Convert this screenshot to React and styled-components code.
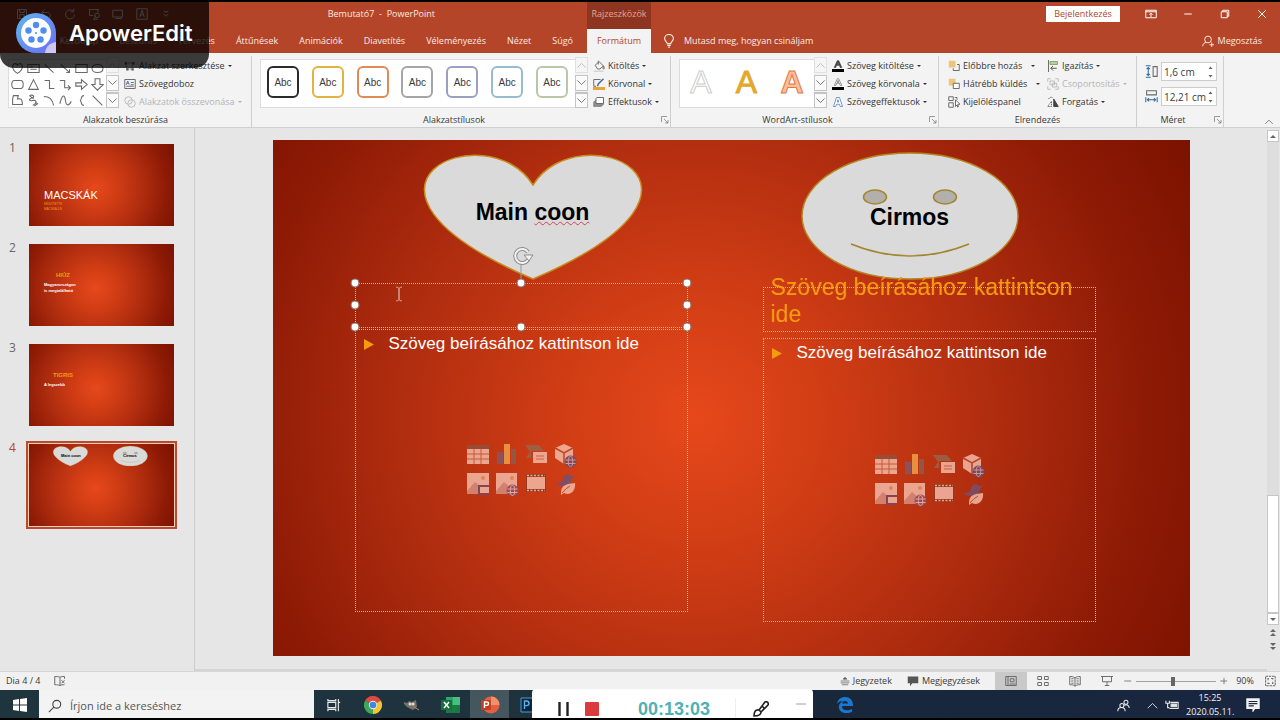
import styled, { createGlobalStyle, css } from 'styled-components';

const color = {
  brand: '#b54528',
  brandDark: '#8d3520',
  ribbon: '#f3f3f3',
  work: '#e6e6e6',
  line: '#cfcfcf',
  text: '#3a3a3a',
  muted: '#b4b4b4',
  icon: '#6a6a6a',
  accent: '#f39c12',
};

const GlobalStyle = createGlobalStyle`
  * { box-sizing: border-box; }
  body {
    margin: 0;
    background: #000;
    font: 500 9px/14px 'Open Sans', 'Noto Sans', sans-serif;
    color: ${color.text};
  }
  button, input {
    margin: 0;
    padding: 0;
    border: 0;
    background: none;
    font: inherit;
    color: inherit;
  }
  p, h1, h2 { margin: 0; }
  svg { display: block; flex: none; }
`;

const Page = styled.div`
  position: relative;
  min-height: 100vh;
  display: flex;
  flex-direction: column;
  padding: 2px 0;
  overflow: hidden;
`;

/* header */

const Header = styled.header`
  display: grid;
  grid-template-columns: 587px 64px 1fr;
  grid-template-rows: 27px 24px;
  background: ${color.brand};
  color: #fbe9e2;
`;

const TitleArea = styled.div`
  display: flex;
  align-items: center;
  justify-content: space-between;
  padding: 0 152px 3px 16px;
`;

const QuickAccess = styled.div`
  display: flex;
  gap: 12px;
`;

const Title = styled.h1`
  font-size: 9px;
  font-weight: 500;
  white-space: pre;
`;

const ContextTitle = styled.div`
  display: flex;
  align-items: center;
  justify-content: center;
  padding-bottom: 3px;
  background: ${color.brandDark};
  color: #e9a48f;
`;

const WindowButtons = styled.div`
  display: flex;
  align-items: center;
  justify-content: flex-end;
  gap: 25px;
  padding: 0 12px 3px 0;
`;

const SignIn = styled.button`
  width: 74px;
  height: 16px;
  background: #fff;
  color: ${color.brand};
  line-height: 14px;
`;

const Tabs = styled.nav`
  display: flex;
  align-items: center;
  justify-content: flex-end;
  gap: 21px;
  padding-right: 14px;
`;

const Tab = styled.button`
  white-space: nowrap;
`;

const ActiveTab = styled.button`
  background: ${color.ribbon};
  color: ${color.brand};
`;

const TabsEnd = styled.div`
  display: flex;
  align-items: center;
  justify-content: space-between;
  padding: 0 18px 0 11px;
`;

const HeaderButton = styled.button`
  display: flex;
  align-items: center;
  gap: ${(p) => p.$gap || 4}px;
`;

/* ribbon */

const Ribbon = styled.section`
  display: grid;
  grid-template-columns: 252px 419px 268px 198px 87px 1fr;
  height: 75px;
  padding: 3px 0 1px;
  background: ${color.ribbon};
  border-bottom: 1px solid ${color.line};
`;

const Group = styled.section`
  display: grid;
  grid-template-rows: 57px 14px;
  padding-left: 8px;
  border-right: 1px solid ${color.line};
`;

const GroupBody = styled.div`
  display: flex;
  align-items: flex-start;
  padding-top: 1px;
`;

const GroupFooter = styled.div`
  position: relative;
  display: flex;
  align-items: center;
  justify-content: center;
  margin-left: -8px;
  padding-right: ${(p) => (p.$launcher ? 14 : 0)}px;
`;

const Launcher = styled.button`
  position: absolute;
  right: 1px;
  top: 3px;
`;

const Gallery = styled.div`
  display: flex;
  align-items: center;
  justify-content: space-between;
  width: ${(p) => p.$width}px;
  height: 49px;
  margin-top: 2px;
  padding: 0 7px 3px 6px;
  background: #fff;
  border: 1px solid #dcdcdc;
  border-right: 0;
`;

const ShapeGrid = styled.div`
  display: grid;
  grid-template-columns: repeat(6, 16px);
  grid-auto-rows: 16px;
  width: 98px;
  height: 49px;
  margin-top: 2px;
  background: #fff;
  border: 1px solid #dcdcdc;
  border-right: 0;
  place-items: center;
`;

const Scroller = styled.div`
  display: flex;
  flex-direction: column;
  width: 13px;
  height: 51px;
  justify-content: space-between;
`;

const ScrollerButton = styled.button`
  height: 16px;
  display: grid;
  place-items: center;
  background: #fafafa;
  border: 1px solid #c4c4c4;
  border-top-width: ${(p) => (p.$more ? 2 : 1)}px;
  opacity: ${(p) => (p.$off ? 0.4 : 1)};
`;

const Preset = styled.button`
  width: 32px;
  height: 32px;
  border: 2px solid ${(p) => p.$color};
  border-radius: 6px;
  font: 10px 'Liberation Sans', Arial, sans-serif;
`;

const WordArt = styled.button`
  width: 30px;
  font: 32px/36px 'Liberation Sans', Arial, sans-serif;
  font-weight: ${(p) => p.$weight};
  color: ${(p) => p.$fill};
  -webkit-text-stroke: 1px ${(p) => p.$stroke};
`;

const Commands = styled.div`
  display: flex;
  flex-direction: column;
  padding-left: ${(p) => p.$left || 5}px;
  ${(p) => p.$width && css`width: ${p.$width}px;`}
`;

const CommandButton = styled.button`
  display: flex;
  align-items: center;
  gap: 3px;
  height: 18px;
  white-space: nowrap;
  color: ${(p) => (p.disabled ? color.muted : '#333')};
`;

const Caret = styled.span`
  margin-left: ${(p) => (p.$far ? 6 : 0)}px;
  border: 2px solid transparent;
  border-top-color: currentColor;
  border-bottom: 0;
`;

const SizeFields = styled.div`
  display: flex;
  flex-direction: column;
  gap: 6px;
  padding-top: 6px;
`;

const SizeField = styled.label`
  display: flex;
  align-items: center;
  gap: 3px;
`;

const Spinner = styled.span`
  display: flex;
  align-items: center;
  width: 56px;
  height: 19px;
  padding: 0 3px 0 2px;
  background: #fff;
  border: 1px solid #cdcdcd;
`;

const SizeInput = styled.input`
  flex: 1;
  min-width: 0;
  font-size: 10px;
`;

const RibbonEnd = styled.div`
  display: flex;
  align-items: flex-end;
  justify-content: flex-end;
  padding: 0 6px 0 0;
`;

/* workspace */

const Workspace = styled.main`
  flex: 1;
  display: grid;
  grid-template-columns: 195px 1fr 13px;
  background: ${color.work};
  border-bottom: 1px solid #d6d6d6;
`;

const SlidePanel = styled.aside`
  display: flex;
  flex-direction: column;
  gap: 18px;
  padding: 16px 20px 16px 0;
  border-right: 1px solid #cdcdcd;
`;

const ThumbRow = styled.div`
  display: grid;
  grid-template-columns: 29px 1fr;
  height: 82px;
`;

const ThumbNumber = styled.span`
  padding-left: 9px;
  font-size: 12px;
  font-weight: 400;
  line-height: 8px;
  color: ${(p) => (p.$active ? color.brand : '#666')};
`;

const slideFill = css`
  background: radial-gradient(ellipse 62% 108% at 46% 54%, #e6481b 0%, #d23e15 22%, #b02d0f 52%, #8d1a05 80%, #7b1200 100%);
`;

const Thumb = styled.div`
  position: relative;
  ${slideFill}
  overflow: hidden;
  font-family: 'Liberation Sans', Arial, sans-serif;
  ${(p) => p.$active && css`
    outline: 2px solid #b84a30;
    outline-offset: 1px;
    box-shadow: 0 0 0 1px #f4cdb4;
  `}
`;

const ThumbText = styled.p`
  position: absolute;
  left: ${(p) => p.$x}px;
  top: ${(p) => p.$y}px;
  font-size: ${(p) => p.$size}px;
  line-height: ${(p) => p.$line || p.$size}px;
  font-weight: ${(p) => (p.$bold ? 700 : 400)};
  color: ${(p) => p.$color || '#fff'};
  white-space: pre-line;
`;

const Stage = styled.div`
  display: flex;
  justify-content: center;
  align-items: flex-start;
  padding: 12px 0 13px;
  border-bottom: 2px solid #d4d4d4;
`;

/* fixed at the 90% zoom level */
const Slide = styled.div`
  position: relative;
  flex: none;
  width: 917px;
  height: 516px;
  ${slideFill}
  font-family: 'Liberation Sans', Arial, sans-serif;
  font-weight: 400;
`;

const SlideLayer = styled.svg`
  position: absolute;
  inset: 0;
`;

const Placed = styled.div`
  position: absolute;
  left: ${(p) => p.$x}px;
  top: ${(p) => p.$y}px;
  width: ${(p) => p.$w}px;
  height: ${(p) => p.$h}px;
`;

const ShapeText = styled(Placed)`
  display: grid;
  place-items: center;
  font-size: 23px;
  font-weight: 700;
  line-height: 28px;
  color: #000;
  text-align: center;
`;

const Misspelled = styled.span`
  text-decoration: underline wavy #d0405a 1px;
  text-underline-offset: 1px;
`;

const Placeholder = styled(Placed)`
  border: 1px dotted #e3b5a5;
`;

const HeadingHint = styled.p`
  margin-top: -14px;
  padding: 0 7px;
  font-size: 23px;
  line-height: 27px;
  color: ${color.accent};
`;

const BodyPlaceholder = styled(Placeholder)`
  display: grid;
  place-items: center;
`;

const BulletHint = styled.p`
  position: absolute;
  left: 8px;
  top: 3px;
  display: flex;
  align-items: center;
  gap: 15px;
  font-size: 17px;
  line-height: 22px;
  color: #fff;
`;

const InsertGrid = styled.div`
  display: grid;
  grid-template-columns: repeat(4, 24px);
  gap: 5px;
`;

const InsertButton = styled.button`
  width: 24px;
  height: 24px;
  opacity: 0.85;
`;

const ScrollColumn = styled.div`
  display: flex;
  flex-direction: column;
  align-items: center;
  padding: 2px 1px 19px 0;
`;

const ScrollButton = styled.button`
  display: grid;
  place-items: center;
  width: 12px;
  height: 12px;
  ${(p) => !p.$plain && css`
    background: #fff;
    border: 1px solid #c6c6c6;
  `}
`;

const Track = styled.div`
  flex: 1;
  display: flex;
  flex-direction: column;
  justify-content: flex-end;
  width: 12px;
  background: #dedede;
`;

const ScrollThumb = styled.div`
  height: 25%;
  background: #fff;
  border: 1px solid #c6c6c6;
`;

const PageJumps = styled.div`
  display: flex;
  flex-direction: column;
  gap: 2px;
  padding-top: 1px;
`;

/* status bar */

const StatusBar = styled.footer`
  display: flex;
  align-items: center;
  justify-content: space-between;
  height: 18px;
  padding-left: 6px;
  background: #f1f1f1;
`;

const StatusPart = styled.div`
  display: flex;
  align-items: center;
  height: 100%;
  gap: ${(p) => p.$gap || 0}px;
`;

const StatusButton = styled.button`
  display: flex;
  align-items: center;
  gap: 3px;
`;

const ViewButton = styled.button`
  display: grid;
  place-items: center;
  width: 32px;
  height: 100%;
  background: ${(p) => (p.$active ? '#c9c9c9' : 'none')};
`;

const ZoomSlider = styled.input`
  appearance: none;
  width: 80px;
  height: 12px;
  background: linear-gradient(#a0a0a0, #a0a0a0) center / 100% 1px no-repeat;
  &::-webkit-slider-thumb {
    appearance: none;
    width: 4px;
    height: 9px;
    background: #666;
  }
`;

/* taskbar */

const Taskbar = styled.div`
  display: flex;
  height: 28px;
  background: linear-gradient(90deg, #1f353e 0%, #1e323d 45%, #18273a 65%, #192640 100%);
  color: #f2f2f2;
`;

const TaskButton = styled.button`
  display: grid;
  place-items: center;
  width: 39px;
  padding-top: 2px;
  background: ${(p) => (p.$active ? '#46565e' : 'none')};
`;

const SearchBox = styled.label`
  display: flex;
  align-items: center;
  gap: 8px;
  width: 275px;
  padding: 3px 0 0 9px;
  background: #f3f3f3;
  color: #444;
`;

const SearchInput = styled.input`
  width: 220px;
  font-size: 11px;
  font-weight: 400;
  &::placeholder { color: #555; opacity: 1; }
`;

const EdgeSlot = styled.div`
  display: grid;
  place-items: center;
  width: 39px;
  margin-left: 277px;
  padding-top: 2px;
`;

const Tray = styled.div`
  display: flex;
  align-items: center;
  gap: 7px;
  margin-left: auto;
  padding: 2px 20px 0 0;
`;

const TrayPeople = styled.div`
  margin-right: 10px;
`;

const Clock = styled.div`
  width: 48px;
  margin-right: 5px;
  text-align: center;
  font-weight: 400;
`;

/* overlays */

const Watermark = styled.div`
  position: absolute;
  left: 0;
  top: 0;
  display: flex;
  align-items: center;
  gap: 13px;
  width: 209px;
  height: 68px;
  padding: 0 0 3px 16px;
  border-radius: 0 0 14px 14px;
  background: rgba(0, 0, 0, 0.76);
  color: #fff;
  font: 600 22px/26px Inter, sans-serif;
`;

const Recorder = styled.div`
  position: absolute;
  left: 532px;
  bottom: 2px;
  display: flex;
  align-items: center;
  width: 281px;
  height: 29px;
  padding: 10px 7px 0 26px;
  overflow: hidden;
  border-radius: 4px 4px 0 0;
  background: #fff;
`;

const RecorderButton = styled.button`
  width: 27px;
  display: grid;
  justify-items: start;
`;

const Elapsed = styled.time`
  width: 98px;
  margin-left: 26px;
  padding-right: 24px;
  border-right: 1px solid #eee;
  font: 700 18px/22px 'Liberation Sans', Arial, sans-serif;
  color: #4fb0b5;
`;

const PenSlot = styled.div`
  margin-left: 17px;
`;

const MinimizeSlot = styled.div`
  align-self: flex-start;
  margin-left: auto;
  height: 10px;
`;

const Icon = ({ size = 12, box = 16, stroke = color.icon, width = 1.3, children, ...rest }) => (
  <svg
    width={size}
    height={size}
    viewBox={`0 0 ${box} ${box}`}
    fill="none"
    stroke={stroke}
    strokeWidth={width}
    aria-hidden="true"
    {...rest}
  >
    {children}
  </svg>
);

const shapes = [
  'M8 14C-1 8 2 2 5 2s3 3 3 3 0-3 3-3 6 6-3 12z',
  'M1 3h14v10H1zM4 6h3M4 9h8',
  'M2 3l11 10',
  'M2 3l11 10M9 13h4V9',
  'M1 3h14v10H1z',
  'M8 3c9 0 9 10 0 10S-1 3 8 3z',
  'M4 3h8c4 0 4 10 0 10H4C0 13 0 3 4 3z',
  'M8 2l6 12H2z',
  'M2 3h6v10h6',
  'M1 3h6v9h7M11 9l3 3-3 3',
  'M1 6h7V2l7 6-7 6v-4H1z',
  'M5 1h6v7h4l-7 7-7-7h4z',
  'M3 2h6L8 6c5-1 6 1 6 7H2V6z',
  'M3 2c5-2 7 2 3 3s-4 4 1 3 6 3 0 6M3 2l5 4M10 10l3 2-4 3',
  'M1 3c8 0 11 5 12 11',
  'M1 12C4 0 7 0 8 8s5 6 7 1',
  'M11 2c-5 0-2 6-5 6 3 0 0 6 5 6',
  'M2 2l12 12',
];

const presets = ['#2b2b2b', '#e3b341', '#e28a55', '#a5a5a5', '#9c9fc4', '#97bcd0', '#bac6a8'];

const wordArts = [
  { fill: '#fff', stroke: '#cdcdcd', weight: 400 },
  { fill: '#e3a82b', stroke: '#e3a82b', weight: 400 },
  { fill: '#f8c0a0', stroke: '#e8773c', weight: 700 },
];

const ChevronUp = () => (
  <Icon size={11}><path d="M2 11l6-6 6 6" /></Icon>
);
const ChevronDown = () => (
  <Icon size={11}><path d="M2 5l6 6 6-6" /></Icon>
);

const GalleryScroller = () => (
  <Scroller>
    <ScrollerButton $off aria-label="Fel"><ChevronUp /></ScrollerButton>
    <ScrollerButton aria-label="Le"><ChevronDown /></ScrollerButton>
    <ScrollerButton $more aria-label="Továbbiak"><ChevronDown /></ScrollerButton>
  </Scroller>
);

const commandIcons = {
  edit: (
    <Icon><path d="M2 4h10l-2 8H4z" strokeDasharray="2 1" /><path d="M1 3h3v3H1zM11 3h3v3h-3zM3 11h3v3H3zM10 11h3v3h-3z" fill="#555" stroke="none" /></Icon>
  ),
  textbox: (
    <Icon><path d="M1 2h14v12H1zM9 6h4M9 9h4M3 11h10" /><path d="M3 9l2-5 2 5M4 7h2" stroke="#4a74a8" /></Icon>
  ),
  merge: (
    <Icon stroke="#bcbcbc"><circle cx="6" cy="6" r="5" /><circle cx="10" cy="10" r="5" /></Icon>
  ),
  fill: (
    <Icon><path d="M3 7l5-5 6 6-5 4H6zM7 1v5M14 8c2 3 1 4 0 4s-1-1 0-4" /><path d="M1 15h13" stroke="#d4d4d4" strokeWidth="2" /></Icon>
  ),
  outline: (
    <Icon><path d="M10 2H1v9h3" /><path d="M6 11l1-3 7-7" stroke="#3f6fae" strokeWidth="2" /><path d="M0 14h16" stroke="#e8a33a" strokeWidth="4" /></Icon>
  ),
  effects: (
    <Icon><path d="M3 6l-2 2v6h10l3-3V6z" fill="#8d8d8d" stroke="#8d8d8d" /><path d="M5 2h9v8H4V3z" fill="#fff" /></Icon>
  ),
  front: (
    <Icon><path d="M1 1h9v9H1z" fill="#ecc777" stroke="none" /><path d="M12 6h3v8H7v-3" /></Icon>
  ),
  back: (
    <Icon><path d="M1 1h9v9H1z" fill="#ecc777" stroke="none" /><path d="M7 7h8v7H7z" fill="#fff" /></Icon>
  ),
  pane: (
    <Icon><path d="M1 1h6v5H1zM1 9h6v6H1z" /><path d="M9 2h3v3M10 5v9l2-2 1 3 1-1-1-3h3z" fill="#fff" /></Icon>
  ),
  align: (
    <Icon><path d="M2 0v16" /><path d="M4 2h10v4H4z" fill="#b7cf9d" stroke="#8aa66c" /><path d="M13 11H5M8 8l-3 3 3 3" stroke="#555" /></Icon>
  ),
  group: (
    <Icon stroke="#bcbcbc"><path d="M4 4h6v5H4zM7 7h6v5H7zM1 5V1h4M11 1h4v4M15 11v4h-4M5 15H1v-4" /></Icon>
  ),
  rotate: (
    <Icon><path d="M9 14V4l6 10z" fill="#444" stroke="#444" /><path d="M1 14l5-7v7zM2 4c2-3 5-3 6-1" strokeDasharray="2 1" /></Icon>
  ),
};

const letterIcon = (fill, stroke, bar) => (
  <Icon>
    <path
      d={bar ? 'M3 10L7 1h2l4 9h-2l-1-3H6l-1 3zM7 6h2L8 3z' : 'M2 14L6 2h4l4 12h-3l-1-3H6l-1 3zM7 8h2L8 5z'}
      fill={fill}
      stroke={stroke}
      strokeWidth="1"
    />
    {bar && <path d="M0 14h16" stroke="#000" strokeWidth="4" />}
  </Icon>
);

const Command = ({ icon, children, caret, far, disabled }) => (
  <CommandButton disabled={disabled}>
    {icon}
    {children}
    {caret && <Caret $far={far} />}
  </CommandButton>
);

const GroupEnd = ({ children, launcher }) => (
  <GroupFooter $launcher={launcher}>
    {children}
    {launcher && (
      <Launcher aria-label="Beállítások">
        <Icon size={8}><path d="M1 12V1h11M6 6l8 8M14 8v6H8" /></Icon>
      </Launcher>
    )}
  </GroupFooter>
);

const Spin = ({ value, label, icon }) => (
  <SizeField>
    {icon}
    <Spinner>
      <SizeInput defaultValue={value} aria-label={label} />
      <svg width="5" height="14" viewBox="0 0 10 28" aria-hidden="true">
        <path d="M1 8l4-5 4 5zM1 20l4 5 4-5z" fill="#666" />
      </svg>
    </Spinner>
  </SizeField>
);

const Globe = ({ fill, stroke }) => (
  <g fill="none" stroke={stroke} strokeWidth="1">
    <circle cx="17.5" cy="17.5" r="5.5" fill={fill} stroke={fill} />
    <ellipse cx="17.5" cy="17.5" rx="2.2" ry="5" />
    <path d="M12.5 16h10M12.5 19.5h10" />
  </g>
);

const inserts = [
  {
    name: 'Táblázat',
    art: <><path d="M1 1h22v4H1z" fill="#94503f" /><path d="M1 5h22v15H1z" fill="#f3b9a6" /><path d="M1 10h22M1 15h22M8 5v15M15 5v15" stroke="#c9603f" /></>,
  },
  {
    name: 'Diagram',
    art: <><path d="M2 8h6v12H2z" fill="#85566a" /><path d="M9 0h6v20H9z" fill="#f0a048" /><path d="M16 5h5v15h-5z" fill="#8d5c50" /></>,
  },
  {
    name: 'SmartArt',
    art: <><path d="M1 1h14l5 6H7v7H2l4-6z" fill="#99644a" /><path d="M9 8h14v11H9z" fill="#f3b9a6" /><path d="M12 12h8M12 15h8" stroke="#d0674a" /></>,
  },
  {
    name: '3D-modell',
    art: <><path d="M11 0l9 4v10l-9 6-9-6V4z" fill="#f3b9a6" /><path d="M2 4l9 5 9-5M11 9v11" stroke="#b84828" fill="none" strokeWidth="1.5" /><Globe fill="#615079" stroke="#d9a6a4" /></>,
  },
  {
    name: 'Kép',
    art: <><path d="M1 0h22v21H1z" fill="#f3b9a6" /><path d="M1 18l8-9 6 5v7H1z" fill="#d58f7f" /><circle cx="17" cy="5" r="2" fill="#e2955f" /><path d="M13 13h11v8H13z" fill="#f3b9a6" stroke="#7a4760" strokeWidth="2" /></>,
  },
  {
    name: 'Online kép',
    art: <><path d="M1 0h21v21H1z" fill="#f3b9a6" /><path d="M1 18l8-9 6 5v7H1z" fill="#d58f7f" /><circle cx="17" cy="5" r="2" fill="#e2955f" /><Globe fill="#8a5270" stroke="#f3b9a6" /></>,
  },
  {
    name: 'Videó',
    art: <><path d="M3 4h18v13H3z" fill="#f3b9a6" /><path d="M2 1h20v18H2zM3 4v12h18V4z" fill="#8c3c26" fillRule="evenodd" /><path d="M3 2.500h18M3 17.500h18" stroke="#f3b9a6" strokeWidth="1.500" strokeDasharray="2 1.500" /></>,
  },
  {
    name: 'Ikon',
    art: <><path d="M1 9c5 3 9 0 9-4 1-4 6-5 8-2l4 0-3 3c0 7-12 10-18 3z" fill="#755170" /><path d="M8 20c0-8 5-9 14-10 1 8-5 13-11 10l-3 2z" fill="#f3b9a6" /><path d="M9 20q4-5 8-7" stroke="#c75333" fill="none" /></>,
  },
];

const Inserts = () => (
  <InsertGrid>
    {inserts.map(({ name, art }) => (
      <InsertButton key={name} aria-label={name}>
        <svg width="24" height="24" viewBox="0 0 24 24">{art}</svg>
      </InsertButton>
    ))}
  </InsertGrid>
);

const Bullet = () => (
  <svg width="10" height="11" viewBox="0 0 10 11"><path d="M0 0l10 5.5L0 11z" fill={color.accent} /></svg>
);

const heart = 'M260 45C305-28 480 45 260 139C40 45 215-28 260 45Z';

const ShapeArt = () => (
  <>
    <path d={heart} fill="#dadada" stroke="#c98a1c" strokeWidth="1.5" />
    <ellipse cx="637" cy="76" rx="108" ry="63" fill="#dadada" stroke="#b5861f" strokeWidth="1.5" />
    <g fill="#b3b0ac" stroke="#a2862f" strokeWidth="1.5">
      <ellipse cx="602" cy="57" rx="11.5" ry="7" />
      <ellipse cx="672" cy="57" rx="11.5" ry="7" />
      <path d="M578 104Q637 128 696 104" fill="none" />
    </g>
  </>
);

const handles = [[82, 143], [248, 143], [414, 143], [82, 165], [414, 165], [82, 187], [248, 187], [414, 187]];

const MainSlide = () => (
  <Slide>
    <SlideLayer width="917" height="516" aria-hidden="true"><ShapeArt /></SlideLayer>
    <ShapeText $x={181} $y={57} $w={158} $h={30}>
      <span>Main <Misspelled>coon</Misspelled></span>
    </ShapeText>
    <ShapeText $x={558} $y={62} $w={158} $h={30}>Cirmos</ShapeText>
    <Placeholder $x={82} $y={143} $w={333} $h={45} />
    <BodyPlaceholder $x={82} $y={189} $w={333} $h={283}>
      <BulletHint><Bullet />Szöveg beírásához kattintson ide</BulletHint>
      <Inserts />
    </BodyPlaceholder>
    <Placeholder $x={490} $y={147} $w={333} $h={45}>
      <HeadingHint>Szöveg beírásához kattintson ide</HeadingHint>
    </Placeholder>
    <BodyPlaceholder $x={490} $y={198} $w={333} $h={284}>
      <BulletHint><Bullet />Szöveg beírásához kattintson ide</BulletHint>
      <Inserts />
    </BodyPlaceholder>
    <SlideLayer width="917" height="516" fill="none" pointerEvents="none" aria-hidden="true">
      <path d="M248 123v16" stroke="#999" />
      <path d="M255 120a7 7 0 1 1 0-8" stroke="#8d8d8d" strokeWidth="4" />
      <path d="M255 120a7 7 0 1 1 0-8" stroke="#f2f2f2" strokeWidth="2" />
      <path d="M251 115h9l-4 6z" fill="#f2f2f2" stroke="#8d8d8d" />
      <path d="M123 147q3 0 3 2v10q0 2-3 2M129 147q-3 0-3 2v10q0 2 3 2" stroke="#cfa192" />
      {handles.map(([x, y]) => (
        <circle key={`${x}-${y}`} cx={x} cy={y} r="4" fill="#fff" stroke="#8b6a60" strokeWidth="1.2" />
      ))}
    </SlideLayer>
  </Slide>
);

const Sidebar = () => (
  <SlidePanel>
    <ThumbRow>
      <ThumbNumber>1</ThumbNumber>
      <Thumb>
        <ThumbText $x={15} $y={44} $size={11} $line={14}>MACSKÁK</ThumbText>
        <ThumbText $x={15} $y={58} $size={3} $line={5} $color={color.accent}>{'KÉSZÍTETTE\nMACSKA 4.B'}</ThumbText>
      </Thumb>
    </ThumbRow>
    <ThumbRow>
      <ThumbNumber>2</ThumbNumber>
      <Thumb>
        <ThumbText $x={27} $y={28} $size={6} $bold $color={color.accent}>HIÚZ</ThumbText>
        <ThumbText $x={15} $y={38} $size={4} $line={6} $bold>{'Magyarországon\nis megtalálható'}</ThumbText>
      </Thumb>
    </ThumbRow>
    <ThumbRow>
      <ThumbNumber>3</ThumbNumber>
      <Thumb>
        <ThumbText $x={24} $y={28} $size={6} $bold $color={color.accent}>TIGRIS</ThumbText>
        <ThumbText $x={15} $y={38} $size={4} $line={6} $bold>A legszebb</ThumbText>
      </Thumb>
    </ThumbRow>
    <ThumbRow>
      <ThumbNumber $active>4</ThumbNumber>
      <Thumb $active>
        <svg width="146" height="82" viewBox="0 0 917 516" aria-hidden="true"><ShapeArt /></svg>
        <ThumbText $x={32} $y={10} $size={4} $bold $color="#000">Main coon</ThumbText>
        <ThumbText $x={94} $y={10} $size={4} $bold $color="#000">Cirmos</ThumbText>
      </Thumb>
    </ThumbRow>
  </SlidePanel>
);

const Arrow = ({ d }) => (
  <svg width="8" height="9" viewBox="0 0 8 9" aria-hidden="true"><path d={d} fill="#666" /></svg>
);

const App = () => (
  <>
    <GlobalStyle />
    <Page>
      <Header>
        <TitleArea>
          <QuickAccess>
            <Icon stroke="#fff"><path d="M2 2h12v12H2zM5 2v4h6V2M5 14V9h6v5" /></Icon>
            <Icon stroke="#fff"><path d="M3 6h7c5 0 5 8 0 8M6 2L2 6l4 4" /></Icon>
            <Icon stroke="#fff"><path d="M12 4a6 6 0 1 0 2 5M13 1v4H9" /></Icon>
            <Icon stroke="#fff"><path d="M1 2h14M2 2v8h5M13 2v4M8 15l2-5M7 15h6" /><circle cx="12" cy="10" r="3" /></Icon>
            <Icon stroke="#fff"><path d="M1 12V3h13v9zM5 14h8" /></Icon>
            <Icon stroke="#fff"><path d="M1 1h14v14H1zM5 12l3-9 3 9M6 9h4" /></Icon>
            <Icon stroke="#fff"><path d="M5 5h6M5 8l3 3 3-3" /></Icon>
          </QuickAccess>
          <Title>{'Bemutató7  -  PowerPoint'}</Title>
        </TitleArea>
        <ContextTitle>Rajzeszközök</ContextTitle>
        <WindowButtons>
          <SignIn>Bejelentkezés</SignIn>
          <Icon stroke="#fff"><path d="M1 3h14v10H1zM1 5h14M8 12V7M6 9l2-2 2 2" /></Icon>
          <Icon stroke="#fff"><path d="M3 8h10" /></Icon>
          <Icon stroke="#fff"><path d="M3 5h8v8H3zM5 5V3h8v8h-2" /></Icon>
          <Icon stroke="#fff"><path d="M3 3l10 10M13 3L3 13" /></Icon>
        </WindowButtons>
        <Tabs>
          {['Fájl', 'Kezdőlap', 'Beszúrás', 'Tervezés', 'Áttűnések', 'Animációk', 'Diavetítés', 'Véleményezés', 'Nézet', 'Súgó'].map((t) => (
            <Tab key={t}>{t}</Tab>
          ))}
        </Tabs>
        <ActiveTab>Formátum</ActiveTab>
        <TabsEnd>
          <HeaderButton $gap={8}>
            <Icon size={14} stroke="#fbe9e2"><path d="M6 11c0-2-3-3-3-6a5 4.500 0 0 1 10 0c0 3-3 4-3 6zM6 13h4M7 15h2" /></Icon>
            Mutasd meg, hogyan csináljam
          </HeaderButton>
          <HeaderButton>
            <Icon stroke="#fbe9e2"><circle cx="8" cy="6" r="4.500" /><path d="M1 15c0-3 2-5 5-5M10 13h6M13 10v6" /></Icon>
            Megosztás
          </HeaderButton>
        </TabsEnd>
      </Header>

      <Ribbon>
        <Group>
          <GroupBody>
            <ShapeGrid>
              {shapes.map((d) => <Icon key={d} size={13}><path d={d} /></Icon>)}
            </ShapeGrid>
            <GalleryScroller />
            <Commands>
              <Command icon={commandIcons.edit} caret>Alakzat szerkesztése</Command>
              <Command icon={commandIcons.textbox}>Szövegdoboz</Command>
              <Command icon={commandIcons.merge} caret disabled>Alakzatok összevonása</Command>
            </Commands>
          </GroupBody>
          <GroupEnd>Alakzatok beszúrása</GroupEnd>
        </Group>

        <Group>
          <GroupBody>
            <Gallery $width={315}>
              {presets.map((c) => <Preset key={c} $color={c}>Abc</Preset>)}
            </Gallery>
            <GalleryScroller />
            <Commands>
              <Command icon={commandIcons.fill} caret>Kitöltés</Command>
              <Command icon={commandIcons.outline} caret>Körvonal</Command>
              <Command icon={commandIcons.effects} caret>Effektusok</Command>
            </Commands>
          </GroupBody>
          <GroupEnd launcher>Alakzatstílusok</GroupEnd>
        </Group>

        <Group>
          <GroupBody>
            <Gallery $width={135}>
              {wordArts.map(({ fill, stroke, weight }) => (
                <WordArt key={fill} $fill={fill} $stroke={stroke} $weight={weight}>A</WordArt>
              ))}
            </Gallery>
            <GalleryScroller />
            <Commands>
              <Command icon={letterIcon('#444', '#444', true)} caret>Szöveg kitöltése</Command>
              <Command icon={letterIcon('#fff', '#777', true)} caret>Szöveg körvonala</Command>
              <Command icon={letterIcon('#fff', '#4d7ab8')} caret>Szövegeffektusok</Command>
            </Commands>
          </GroupBody>
          <GroupEnd launcher>WordArt-stílusok</GroupEnd>
        </Group>

        <Group>
          <GroupBody>
            <Commands $left={1} $width={99}>
              <Command icon={commandIcons.front} caret far>Előbbre hozás</Command>
              <Command icon={commandIcons.back} caret far>Hátrébb küldés</Command>
              <Command icon={commandIcons.pane}>Kijelöléspanel</Command>
            </Commands>
            <Commands $left={1}>
              <Command icon={commandIcons.align} caret>Igazítás</Command>
              <Command icon={commandIcons.group} caret disabled>Csoportosítás</Command>
              <Command icon={commandIcons.rotate} caret>Forgatás</Command>
            </Commands>
          </GroupBody>
          <GroupEnd>Elrendezés</GroupEnd>
        </Group>

        <Group>
          <SizeFields>
            <Spin
              value="1,6 cm"
              label="Magasság"
              icon={<Icon size={13}><path d="M10 2h5v12h-5z" /><path d="M1 1h6M1 15h6M4 3v10M2 5l2-2 2 2M2 11l2 2 2-2" stroke="#2e6a9c" /></Icon>}
            />
            <Spin
              value="12,21 cm"
              label="Szélesség"
              icon={<Icon size={13}><path d="M2 1h12v5H2z" /><path d="M1 9v6M15 9v6M3 12h10M5 10l-2 2 2 2M11 10l2 2-2 2" stroke="#2e6a9c" /></Icon>}
            />
          </SizeFields>
          <GroupEnd launcher>Méret</GroupEnd>
        </Group>

        <RibbonEnd>
          <Icon size={10}><path d="M2 11l6-6 6 6" /></Icon>
        </RibbonEnd>
      </Ribbon>

      <Workspace>
        <Sidebar />
        <Stage><MainSlide /></Stage>
        <ScrollColumn>
          <ScrollButton aria-label="Görgetés fel"><Arrow d="M1 6l3-3 3 3z" /></ScrollButton>
          <Track><ScrollThumb /></Track>
          <ScrollButton aria-label="Görgetés le"><Arrow d="M1 3l3 3 3-3z" /></ScrollButton>
          <PageJumps>
            <ScrollButton $plain aria-label="Előző dia"><Arrow d="M1 4l3-3 3 3zM1 8l3-3 3 3z" /></ScrollButton>
            <ScrollButton $plain aria-label="Következő dia"><Arrow d="M1 1l3 3 3-3zM1 5l3 3 3-3z" /></ScrollButton>
          </PageJumps>
        </ScrollColumn>
      </Workspace>

      <StatusBar>
        <StatusPart $gap={14}>
          <span>Dia 4 / 4</span>
          <Icon><path d="M8 3C6 2 3 2 1 2v11c3 0 5 0 7 1V3c1-1 3-1 6-1v3M8 14c2-1 3-1 6-1M10 7l4 4M14 7l-4 4" /></Icon>
        </StatusPart>
        <StatusPart>
          <StatusPart $gap={15}>
            <StatusButton>
              <Icon size={10}><path d="M1 8h14M1 11h14M3 14h10" /><path d="M5 5l3-3 3 3z" fill="#555" /></Icon>
              Jegyzetek
            </StatusButton>
            <StatusButton>
              <Icon><path d="M1 2h14v9H7l-3 4v-4H1z" fill="#555" stroke="none" /></Icon>
              Megjegyzések
            </StatusButton>
            <StatusPart>
              <ViewButton $active aria-label="Normál">
                <Icon><path d="M1 2h14v12H1zM4 2v12M7 5h5v4H7zM6 12h8" /></Icon>
              </ViewButton>
              <ViewButton aria-label="Diarendező">
                <Icon><path d="M1 2h5v4H1zM10 2h5v4h-5zM1 10h5v4H1zM10 10h5v4h-5z" /></Icon>
              </ViewButton>
              <ViewButton aria-label="Olvasó nézet">
                <Icon><path d="M8 4C6 2 3 2 1 2v11c3 0 5 0 7 2 2-2 4-2 7-2V2c-3 0-5 0-7 2zv11M3 5h3M3 8h3M3 11h3M10 5h3M10 8h3M10 11h3" /></Icon>
              </ViewButton>
              <ViewButton aria-label="Diavetítés">
                <Icon><path d="M0 2h16M2 2v7h12V2M8 9v5M5 14h6" /></Icon>
              </ViewButton>
            </StatusPart>
          </StatusPart>
          <StatusPart $gap={3}>
            <Icon size={10}><path d="M2 8h11" /></Icon>
            <ZoomSlider type="range" min="10" max="400" defaultValue="190" aria-label="Nagyítás" />
            <Icon size={10}><path d="M2 8h11M8 3v10" /></Icon>
          </StatusPart>
          <StatusPart $gap={3}>
            <ViewButton as="span">90%</ViewButton>
            <Icon size={16} viewBox="0 0 20 16"><path d="M2 2h12v12H2zM5 7V5h2M9 5h2v2M11 9v2H9M7 11H5V9" strokeDasharray="3 1" /></Icon>
          </StatusPart>
        </StatusPart>
      </StatusBar>

      <Taskbar>
        <TaskButton aria-label="Start">
          <svg width="14" height="14" viewBox="0 0 14 14"><path d="M0 2l6-1v5.500H0zM7 1l7-1v6.500H7zM0 7.500h6V13l-6-1zM7 7.500h7V14l-7-1z" fill="#fff" /></svg>
        </TaskButton>
        <SearchBox>
          <Icon size={14} stroke="#444"><circle cx="10" cy="6" r="4.500" /><path d="M7 9l-6 6" /></Icon>
          <SearchInput placeholder="Írjon ide a kereséshez" aria-label="Keresés" />
        </SearchBox>
        <TaskButton aria-label="Feladatnézet">
          <Icon size={14} stroke="#e8e8e8"><path d="M1 1v2h9V1M1 5h9v6H1zM1 15v-2h9v2M13 1v14M13 5h2" /></Icon>
        </TaskButton>
        <TaskButton aria-label="Chrome">
          <svg width="18" height="18" viewBox="0 0 18 18">
            <path d="M9 9L1.200 4.500A9 9 0 0 1 16.800 4.500z" fill="#dd4b3e" />
            <path d="M9 9L16.800 4.500A9 9 0 0 1 9 18z" fill="#f4c430" />
            <path d="M9 9v9A9 9 0 0 1 1.200 4.500z" fill="#3fa757" />
            <circle cx="9" cy="9" r="4.200" fill="#eee" /><circle cx="9" cy="9" r="3.300" fill="#4285e0" />
          </svg>
        </TaskButton>
        <TaskButton aria-label="GIMP">
          <svg width="18" height="14" viewBox="0 0 18 14">
            <path d="M1 4l3 1 2-2 3 1 4-2 1 7-4 3-6-3-3-3z" fill="#77716a" />
            <circle cx="7" cy="6" r="1.500" fill="#ddd" /><circle cx="10" cy="6" r="1.500" fill="#ddd" /><path d="M11 9l5 3" stroke="#b28a5a" />
          </svg>
        </TaskButton>
        <TaskButton aria-label="Excel">
          <svg width="20" height="18" viewBox="0 0 20 18">
            <path d="M5 1h14v16H5z" fill="#2fa568" /><path d="M12 1h7v8h-7z" fill="#45c080" /><path d="M5 9h14v8H5z" fill="#1a7a44" />
            <path d="M0 4h11v10H0z" fill="#15703d" /><path d="M3 6l5 6M8 6l-5 6" stroke="#fff" strokeWidth="1.500" />
          </svg>
        </TaskButton>
        <TaskButton $active aria-label="PowerPoint">
          <svg width="20" height="18" viewBox="0 0 20 18">
            <circle cx="11" cy="9" r="8.500" fill="#e0603f" /><path d="M11 .500a8.500 8.500 0 0 1 8.500 8.500H11z" fill="#f5906c" />
            <path d="M1 4h10v10H1z" fill="#c43e1f" /><path d="M4.500 12V6h2q2 0 2 1.700t-2 1.700h-2" stroke="#fff" strokeWidth="1.400" fill="none" />
          </svg>
        </TaskButton>
        <TaskButton aria-label="Photoshop">
          <svg width="18" height="16" viewBox="0 0 18 16">
            <path d="M1 1h16v14H1z" fill="#0b2740" stroke="#4b9ccf" /><path d="M4.500 12V4h2q2.500 0 2.500 2.300T6.500 8.600h-2" stroke="#58b2e8" fill="none" strokeWidth="1.400" />
          </svg>
        </TaskButton>
        <EdgeSlot>
          <svg width="16" height="16" viewBox="0 0 16 16">
            <path d="M0 7C1 2 4 0 8 0c5 0 8 3 8 9H5c0 5 6 5 10 3v3C8 18 1 15 2 9c0-2 2-4 4-5-3 0-5 1-6 3zM5 6.500h6C11 3 5.500 3 5 6.500z" fill="#1b78d2" />
          </svg>
        </EdgeSlot>
        <Tray>
          <TrayPeople>
            <Icon size={13} stroke="#e6e6e6"><circle cx="6" cy="8" r="2.500" /><path d="M1 15c0-6 9-6 9 0" /><circle cx="11" cy="4" r="2.500" /><path d="M9 8c3-2 6 0 6 3" /></Icon>
          </TrayPeople>
          <Icon size={11} stroke="#e6e6e6"><path d="M1 12l7-7 7 7" /></Icon>
          <Icon size={14} stroke="#e6e6e6"><path d="M6 5h9v7H5" /><path d="M7 7h6v3H7z" fill="#e6e6e6" /><path d="M1 3v3h4V3M3 6v5h2" /></Icon>
          <Clock>15:25<br />2020.05.11.</Clock>
          <Icon size={14} stroke="#192640"><path d="M1 1h14v11h-5l-2 3v-3H1z" fill="#f2f2f2" stroke="#f2f2f2" /><path d="M3 4h10M3 6.500h10M3 9h6" /></Icon>
        </Tray>
      </Taskbar>

      <Watermark>
        <svg width="40" height="40" viewBox="0 0 40 40" aria-hidden="true">
          <defs>
            <linearGradient id="logo" x1="0" y1="0" x2="1" y2="1">
              <stop offset="0" stopColor="#5cb8f5" /><stop offset="1" stopColor="#6c6cf2" />
            </linearGradient>
          </defs>
          <path d="M20 0a20 20 0 0 1 20 20v20H20a20 20 0 0 1 0-40z" fill="url(#logo)" />
          <path d="M40 29v11H29c1-7 5-10 11-11z" fill="#cfc6f8" />
          <circle cx="20" cy="20" r="15" fill="#fff" />
          <g fill="#4f8df0">
            <circle cx="20" cy="12" r="3.200" /><circle cx="27.500" cy="17.500" r="3.200" /><circle cx="12.500" cy="17.500" r="3.200" />
            <circle cx="15.500" cy="26.500" r="3.200" /><circle cx="24.500" cy="26.500" r="3.200" /><circle cx="20" cy="20" r="1" />
          </g>
        </svg>
        ApowerEdit
      </Watermark>

      <Recorder>
        <RecorderButton aria-label="Szünet">
          <svg width="11" height="14" viewBox="0 0 11 14"><path d="M1.500 0v14M9.500 0v14" stroke="#222" strokeWidth="2.400" /></svg>
        </RecorderButton>
        <RecorderButton aria-label="Leállítás">
          <svg width="14" height="14" viewBox="0 0 14 14"><rect width="14" height="14" rx="1" fill="#dc3b3e" /></svg>
        </RecorderButton>
        <Elapsed>00:13:03</Elapsed>
        <PenSlot>
          <Icon size={16} stroke="#222" width={1.6}><path d="M6 9l6-8c2-1 4 1 3 3l-7 7M6 9l2 2c0 4-4 4-7 4 0-3 1-7 5-6zM9 5l3 3" /></Icon>
        </PenSlot>
        <MinimizeSlot>
          <Icon size={10} stroke="#888"><path d="M0 8h16" /></Icon>
        </MinimizeSlot>
      </Recorder>
    </Page>
  </>
);

export default App;
